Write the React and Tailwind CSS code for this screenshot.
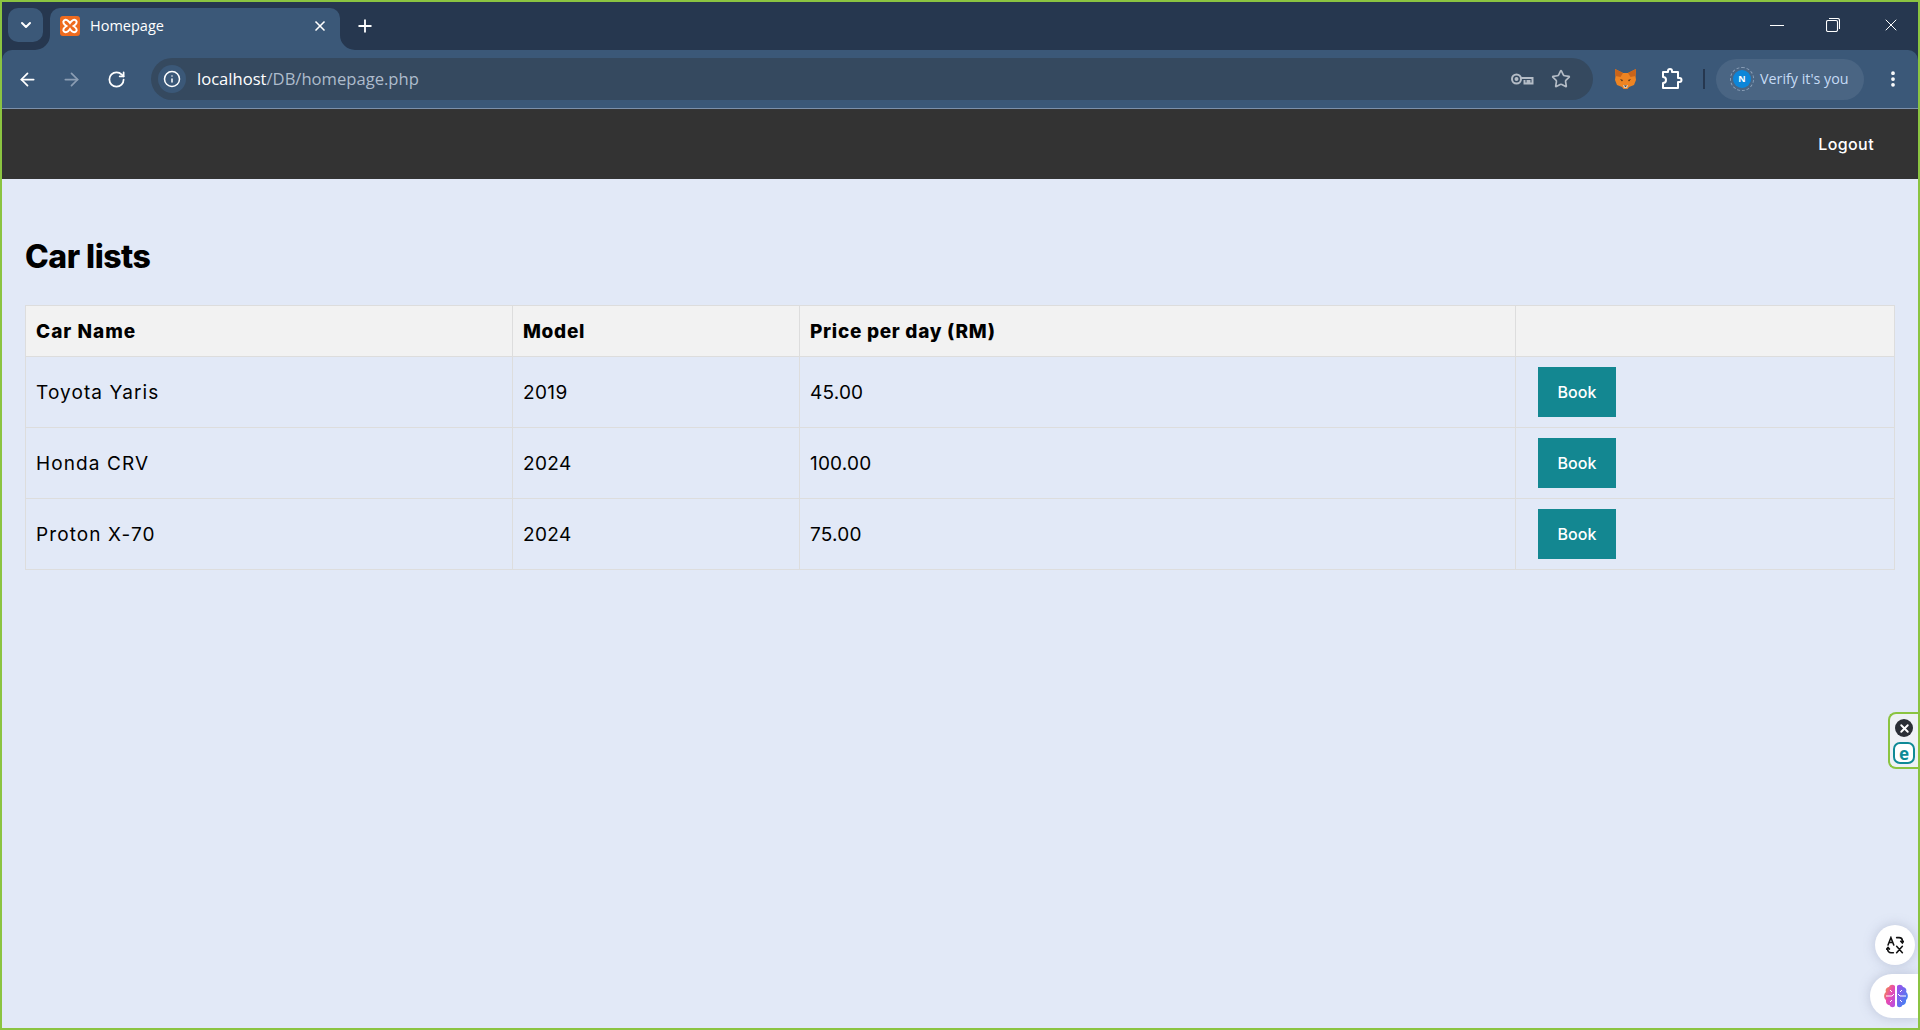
import { ArrowLeft, ArrowRight, ChevronDown, Info, MoreVertical, Plus, RotateCw, Star, X } from 'lucide-react'

const cars = [
  { name: 'Toyota Yaris', model: '2019', price: '45.00' },
  { name: 'Honda CRV', model: '2024', price: '100.00' },
  { name: 'Proton X-70', model: '2024', price: '75.00' },
]

const page = "font-['Inter',sans-serif]"
const chrome = "font-['Open_Sans',sans-serif]"

function XamppIcon() {
  return (
    <svg width="20" height="20" viewBox="0 0 20 20">
      <rect width="20" height="20" rx="3" fill="#ee6b1f" />
      <path
        d="M4 4.500C6 3 8 4 10 7c2-3 4-4 6-2.500 1.500 1.500.5 3.500-2.500 5.500 3 2 4 4 2.500 5.500-2 1.500-4 .5-6-2.500-2 3-4 4-6 2.500C2.500 14 3.500 12 6.500 10 3.500 8 2.500 6 4 4.500z"
        fill="none"
        stroke="#fff"
        strokeWidth="2"
      />
    </svg>
  )
}

function KeyIcon() {
  return (
    <svg width="24" height="14" viewBox="0 0 24 14" fill="none" stroke="#b4bcc6" strokeWidth="2">
      <circle cx="6.500" cy="7" r="4.500" />
      <circle cx="6.500" cy="7" r="1" fill="#b4bcc6" />
      <path d="M11 6h11.500v5.500h-3V9h-2v2.500h-3V8" />
    </svg>
  )
}

function FoxIcon() {
  return (
    <svg width="21" height="20" viewBox="0 0 21 20">
      <path d="M0 0l8 4h5l8-4-.5 7 .5 4-2 5-5 2-1.500 2h-4L7 18l-5-2-2-5 .5-4z" fill="#ee8422" />
      <path d="M0 0l8 4-2.500 4-5-1zM21 0l-8 4 2.500 4 5-1z" fill="#c9641a" />
      <path d="M5 10l3 1-1 1.500zM16 10l-3 1 1 1.500z" fill="#4a2f1c" />
      <path d="M8 16h5l-1 3H9z" fill="#d9c8b8" />
      <path d="M9 16.500h3l-1.500 1.500z" fill="#222" />
    </svg>
  )
}

function PuzzleIcon() {
  return (
    <svg width="22" height="22" viewBox="0 0 22 22" fill="none" stroke="#fff" strokeWidth="2" strokeLinejoin="round">
      <path d="M2 4h5V3a2 2 0 0 1 4 0v1h6v6h1.500a2 2 0 0 1 0 4H17v6H2v-5a3 3 0 0 0 0-6z" />
    </svg>
  )
}

function TranslateIcon() {
  return (
    <svg width="18" height="18" viewBox="0 0 22 22" fill="none" stroke="#111" strokeWidth="1.900" strokeLinecap="round">
      <path d="M2.500 11L6 2l3.500 9M3.800 8h4.400" />
      <path d="M13 12.500l7 8M20 12.500l-7 8" />
      <path d="M13 2h3a4 4 0 0 1 4 4v2M18 6.500L20 8.500 21.500 6.500" />
      <path d="M9 20.500H6a4 4 0 0 1-4-4v-2M.8 16l1.700-2 1.700 2" />
    </svg>
  )
}

function BrainIcon() {
  return (
    <svg width="26" height="26" viewBox="0 0 26 26">
      <defs>
        <linearGradient id="brainLeft" x1="0" y1="0" x2="1" y2="1">
          <stop offset="0" stopColor="#f59e2e" />
          <stop offset="0.5" stopColor="#e84bb0" />
          <stop offset="1" stopColor="#b14de8" />
        </linearGradient>
        <linearGradient id="brainRight" x1="0" y1="0" x2="1" y2="1">
          <stop offset="0" stopColor="#a64de8" />
          <stop offset="1" stopColor="#2f8df5" />
        </linearGradient>
      </defs>
      <path d="M12 3.500C12 1.500 7 .5 6 4 3 4.500 2 7 3 9c-2.500 2-2.500 6 0 8-.5 3 1.500 5 3.500 5 1 3 5.500 3 5.500 0z" fill="url(#brainLeft)" />
      <path d="M14 3.500C14 1.500 19 .5 20 4c3 .5 4 3 3 5 2.500 2 2.500 6 0 8 .5 3-1.500 5-3.500 5-1 3-5.500 3-5.500 0z" fill="url(#brainRight)" />
      <path d="M3 13h6l2-2M7 7l2 2M7 19l2-2M23 13h-6l-2-2M19 7l-2 2M19 19l-2-2" fill="none" stroke="#fff" strokeWidth="1" />
    </svg>
  )
}

function TabStrip() {
  return (
    <div className="flex h-[48px] items-end bg-[#26374f] pl-[6px]">
      <button className="mb-[8px] flex h-[34px] w-[35px] items-center justify-center rounded-[10px] bg-[#3b5878] text-white">
        <ChevronDown size={16} strokeWidth={3} />
      </button>
      <div className="relative ml-[7px] flex h-[42px] w-[290px] items-center rounded-t-[10px] bg-[#3b5878] pb-[6px] pl-[10px] pr-[12px] text-white">
        <svg className="absolute bottom-0 left-[-15px]" width="15" height="15" viewBox="0 0 15 15">
          <path d="M15 0v15H0A15 15 0 0 0 15 0z" fill="#3b5878" />
        </svg>
        <svg className="absolute bottom-0 right-[-15px]" width="15" height="15" viewBox="0 0 15 15">
          <path d="M0 0v15h15A15 15 0 0 1 0 0z" fill="#3b5878" />
        </svg>
        <XamppIcon />
        <span className={`ml-[10px] flex-1 text-[14.500px] ${chrome}`}>Homepage</span>
        <X size={16} strokeWidth={2.500} />
      </div>
      <div className="mb-[9px] ml-[10px] flex h-[30px] w-[30px] items-center justify-center text-white">
        <Plus size={20} strokeWidth={2.200} />
      </div>
      <div className="mb-[15px] ml-auto flex items-center pr-[17px] text-white">
        <div className="h-[1px] w-[14px] bg-white" />
        <svg className="ml-[42px]" width="14" height="14" viewBox="0 0 14 14" fill="none" stroke="#fff" strokeWidth="1.100">
          <rect x="0.500" y="2.500" width="11" height="11" rx="1.500" />
          <path d="M3 .5h8.500a2 2 0 0 1 2 2V11" />
        </svg>
        <X className="ml-[41px]" size={20} strokeWidth={1.200} />
      </div>
    </div>
  )
}

function Toolbar() {
  return (
    <div className="bg-[#26374f]">
      <div className="flex h-[59px] items-center rounded-t-[10px] border-b border-[#7c90aa] bg-[#3b5878] pl-[15px] pr-[8px]">
        <ArrowLeft size={21} className="text-white" strokeWidth={2} />
        <ArrowRight size={21} className="ml-[23px] text-[#8b9db3]" strokeWidth={2} />
        <RotateCw size={19} className="ml-[25px] text-white" strokeWidth={2.200} />
        <div className={`ml-[25px] flex h-[42px] w-[1442px] items-center rounded-full bg-[#35495f] pl-[7px] pr-[22px] ${chrome}`}>
          <div className="flex h-[28px] w-[28px] items-center justify-center rounded-full bg-[#3b5878] text-white">
            <Info size={18} strokeWidth={2} />
          </div>
          <span className="ml-[11px] flex-1 text-[16.600px] text-[#aebccc]">
            <span className="text-white">localhost</span>/DB/homepage.php
          </span>
          <KeyIcon />
          <Star size={20} className="ml-[17px] text-[#b4bcc6]" strokeWidth={2} />
        </div>
        <div className="ml-[22px]"><FoxIcon /></div>
        <div className="ml-[25px]"><PuzzleIcon /></div>
        <div className="ml-[20px] h-[20px] w-[2px] bg-[#26374f]" />
        <div className={`ml-[11px] flex h-[41px] w-[148px] items-center rounded-full bg-[#4a6583] pl-[14px] ${chrome}`}>
          <div className="flex h-[24px] w-[24px] items-center justify-center rounded-full border border-dashed border-[#8ca0b8]">
            <div className="flex h-[18px] w-[18px] items-center justify-center rounded-full bg-[#0d86d9] text-[9px] font-bold text-white">N</div>
          </div>
          <span className="ml-[6px] text-[14.300px] text-[#c6dbf5]">Verify it's you</span>
        </div>
        <MoreVertical size={20} className="ml-[19px] text-white" strokeWidth={2.500} />
      </div>
    </div>
  )
}

function CarTable() {
  return (
    <table className="w-full table-fixed border-collapse text-[19px] text-black">
      <colgroup>
        <col className="w-[487px]" />
        <col className="w-[287px]" />
        <col className="w-[716px]" />
        <col />
      </colgroup>
      <thead>
        <tr className="h-[51px] bg-[#f2f2f2] text-left">
          <th className="border border-[#ddd] px-[10px] pt-[2px] font-extrabold tracking-[1px]">Car Name</th>
          <th className="border border-[#ddd] px-[10px] pt-[2px] font-extrabold tracking-[0.7px]">Model</th>
          <th className="border border-[#ddd] px-[10px] pt-[2px] font-extrabold tracking-[0.7px]">Price per day (RM)</th>
          <th className="border border-[#ddd] px-[10px]" />
        </tr>
      </thead>
      <tbody>
        {cars.map((car) => (
          <tr key={car.name} className="h-[71px]">
            <td className="border border-[#ddd] px-[10px] pt-[2px] tracking-[1.1px]">{car.name}</td>
            <td className="border border-[#ddd] px-[10px] pt-[2px] tracking-[0.4px]">{car.model}</td>
            <td className="border border-[#ddd] px-[10px] pt-[2px] tracking-[0.2px]">{car.price}</td>
            <td className="border border-[#ddd] px-[10px]">
              <button className="ml-[12px] block h-[50px] w-[78px] bg-[#138791] text-[16px] font-medium text-white">Book</button>
            </td>
          </tr>
        ))}
      </tbody>
    </table>
  )
}

export default function App() {
  return (
    <div className="relative flex h-[1030px] flex-col overflow-hidden border-2 border-[#8bc441] bg-[#e2e9f7]">
      <TabStrip />
      <Toolbar />

      <div className={page}>
        <nav className="flex h-[70px] items-center justify-end bg-[#333] pr-[44px]">
          <a className="text-[16px] font-medium tracking-[0.4px] text-white">Logout</a>
        </nav>
        <main className="px-[23px] pt-[54px]">
          <h1 className="text-[32px] font-extrabold leading-[48px] tracking-[-0.5px] text-black">Car lists</h1>
          <div className="mt-[24px]">
            <CarTable />
          </div>
        </main>
      </div>

      {/* extension widgets floating over the page */}
      <div className="absolute right-0 top-[710px] flex h-[57px] w-[30px] flex-col items-center gap-[5px] rounded-l-[8px] border-2 border-r-0 border-[#8bc441] bg-[#eef1f6] pt-[5px]">
        <div className="flex h-[18px] w-[18px] items-center justify-center rounded-full bg-[#2b2f36] text-white">
          <X size={13} strokeWidth={3.500} />
        </div>
        <div className="flex h-[22px] w-[22px] items-center justify-center rounded-[7px] border-2 border-[#0f8a96] bg-white text-[17px] font-bold leading-none text-[#0f8a96]">e</div>
      </div>
      <div className="absolute right-[3px] top-[923px] flex h-[40px] w-[40px] items-center justify-center rounded-full bg-white shadow-[0_0_12px_rgba(120,130,160,0.35)]">
        <TranslateIcon />
      </div>
      <div className="absolute right-0 top-[972px] flex h-[44px] w-[48px] items-center rounded-l-full bg-white pl-[13px] shadow-[0_0_12px_rgba(120,130,160,0.35)]">
        <BrainIcon />
      </div>
    </div>
  )
}
